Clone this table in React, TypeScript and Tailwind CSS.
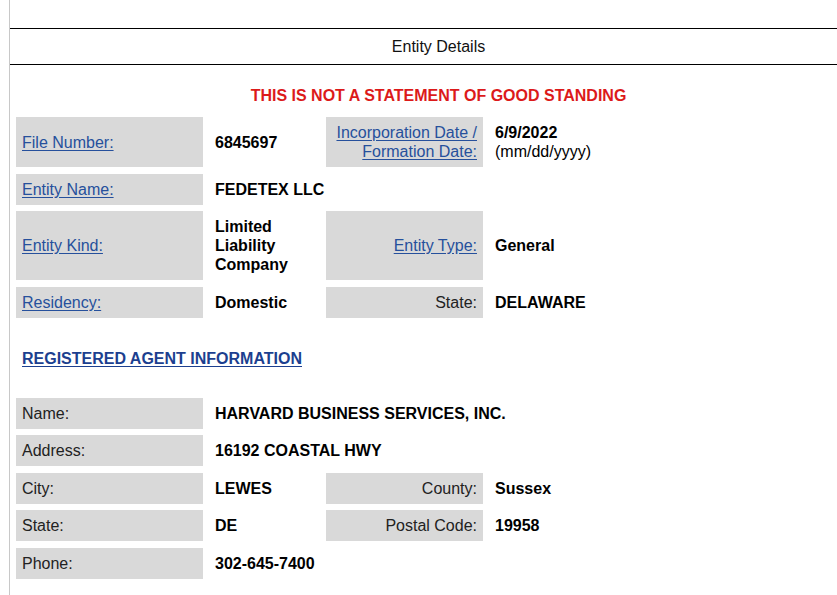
import type { ReactNode } from "react";

const font = { fontFamily: '"Liberation Sans", Arial, sans-serif' };

// Grey label cell, optionally a link and right-aligned
const Label = ({
  children,
  link = false,
  right = false,
  span = "",
}: {
  children: ReactNode;
  link?: boolean;
  right?: boolean;
  span?: string;
}) => (
  <div
    className={`bg-[#d9d9d9] px-[6px] py-[6px] flex items-center ${
      right ? "justify-end text-right" : ""
    } ${span}`}
  >
    {link ? (
      <a href="#" className="text-[#26509c] underline underline-offset-2">
        {children}
      </a>
    ) : (
      <span className="text-[#222]">{children}</span>
    )}
  </div>
);

const Value = ({
  children,
  span = "",
}: {
  children?: ReactNode;
  span?: string;
}) => (
  <div
    className={`px-[6px] py-[6px] flex items-center font-bold text-black ${span}`}
  >
    <div>{children}</div>
  </div>
);

const grid =
  "grid grid-cols-[187px_111px_157px_1fr] gap-x-[6px] gap-y-[6.5px] pl-[6px]";

export default function App() {
  return (
    <div
      className="w-[837px] h-[595px] overflow-hidden bg-white text-[16px] leading-[19px]"
      style={font}
    >
      <div className="ml-[9px] w-[858px] min-h-[595px] border-l border-[#c8c8c8] pt-[28px]">
        {/* Header bar */}
        <div className="border-y border-black h-[37px] flex items-center justify-center text-[#111]">
          Entity Details
        </div>

        <div className="mt-[21px] mb-[12px] text-center font-bold text-[#dc1a1a]">
          THIS IS NOT A STATEMENT OF GOOD STANDING
        </div>

        {/* Entity details */}
        <div className={grid}>
          <Label link>File Number:</Label>
          <Value>6845697</Value>
          <Label link right>
            Incorporation Date /
            <br />
            Formation Date:
          </Label>
          <Value>
            6/9/2022
            <br />
            <span className="font-normal">(mm/dd/yyyy)</span>
          </Value>

          <Label link>Entity Name:</Label>
          <Value span="col-span-3">FEDETEX LLC</Value>

          <Label link>Entity Kind:</Label>
          <Value>
            Limited
            <br />
            Liability
            <br />
            Company
          </Value>
          <Label link right>
            Entity Type:
          </Label>
          <Value>General</Value>

          <Label link>Residency:</Label>
          <Value>Domestic</Value>
          <Label right>State:</Label>
          <Value>DELAWARE</Value>
        </div>

        <div className="mt-[31px] mb-[30px] pl-[12px]">
          <a
            href="#"
            className="font-bold text-[#1c3f8f] underline underline-offset-2"
          >
            REGISTERED AGENT INFORMATION
          </a>
        </div>

        {/* Registered agent */}
        <div className={grid}>
          <Label>Name:</Label>
          <Value span="col-span-3">HARVARD BUSINESS SERVICES, INC.</Value>

          <Label>Address:</Label>
          <Value span="col-span-3">16192 COASTAL HWY</Value>

          <Label>City:</Label>
          <Value>LEWES</Value>
          <Label right>County:</Label>
          <Value>Sussex</Value>

          <Label>State:</Label>
          <Value>DE</Value>
          <Label right>Postal Code:</Label>
          <Value>19958</Value>

          <Label>Phone:</Label>
          <Value span="col-span-3">302-645-7400</Value>
        </div>
      </div>
    </div>
  );
}
